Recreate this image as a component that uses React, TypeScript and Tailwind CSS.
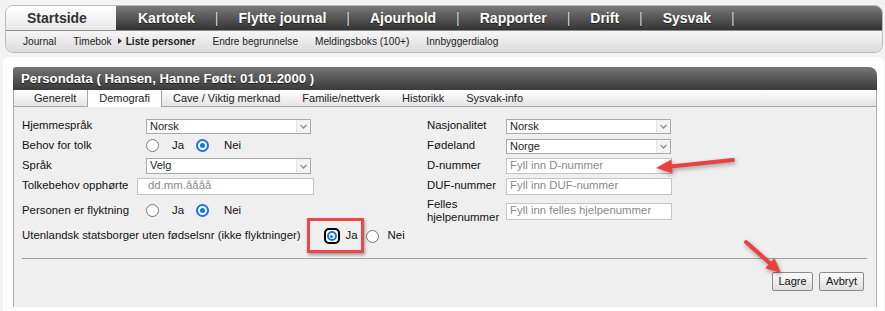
import React from "react";

const navItems = ["Kartotek", "Flytte journal", "Ajourhold", "Rapporter", "Drift", "Sysvak"];
const tabs = ["Generelt", "Demografi", "Cave / Viktig merknad", "Familie/nettverk", "Historikk", "Sysvak-info"];

function Radio({ checked = false }: { checked?: boolean }) {
  if (checked) {
    return (
      <span className="flex h-[13px] w-[13px] shrink-0 items-center justify-center rounded-full border-2 border-[#1a73e8] bg-white">
        <span className="h-[5px] w-[5px] rounded-full bg-[#1a73e8]" />
      </span>
    );
  }
  return <span className="block h-[13px] w-[13px] shrink-0 rounded-full border border-[#767676] bg-white" />;
}

function JaNei({ ja }: { ja: boolean }) {
  return (
    <div className="flex items-center">
      <Radio checked={ja} />
      <span className="ml-[13px]">Ja</span>
      <span className="ml-[12px]">
        <Radio checked={!ja} />
      </span>
      <span className="ml-[15px]">Nei</span>
    </div>
  );
}

function Select({ value, h = "h-[15px]" }: { value: string; h?: string }) {
  return (
    <div className={`flex w-[165px] items-stretch border border-[#a9a9a9] bg-white text-[11px] ${h}`}>
      <span className="flex-1 pl-[3px] leading-[13px] text-[#222]">{value}</span>
      <span className="flex w-[14px] items-center justify-center border-l border-[#e2e2e2] bg-[#f4f4f4]">
        <svg width="7" height="5" viewBox="0 0 7 5">
          <path d="M0.5 0.8 L3.5 4 L6.5 0.8" fill="none" stroke="#8a8a8a" strokeWidth="1.2" />
        </svg>
      </span>
    </div>
  );
}

function TextInput({ placeholder, w = "w-[166px]", h = "h-[17px]", pl = "pl-[3px]" }: { placeholder: string; w?: string; h?: string; pl?: string }) {
  return (
    <div className={`flex items-center border border-[#c4c4c4] bg-white text-[#8a8a8a] ${w} ${h} ${pl}`}>
      {placeholder}
    </div>
  );
}

export default function App() {
  return (
    <div className="relative h-[311px] w-[885px] overflow-hidden bg-[#f3f3f3] font-['Liberation_Sans',Arial,sans-serif] text-[#111]">
      {/* main navigation */}
      <div className="ml-[5px] mr-[2px] mt-[5px] rounded-[8px] border border-[#b8b8b8]">
        <div className="flex h-[24px]">
          <div className="flex w-[110px] items-center rounded-tl-[7px] bg-gradient-to-b from-white to-[#e8e8e8] pl-[21px] text-[14px] font-bold text-[#333]">
            Startside
          </div>
          <div className="flex flex-1 items-center gap-[20px] rounded-tr-[7px] bg-gradient-to-b from-[#7c7c7c] via-[#555] to-[#333] pl-[22px] text-[14px] font-bold text-white [text-shadow:0_1px_1px_rgba(0,0,0,0.6)]">
            {navItems.map((item) => (
              <React.Fragment key={item}>
                <span>{item}</span>
                <span className="font-normal text-[#ddd]">|</span>
              </React.Fragment>
            ))}
          </div>
        </div>
        <div className="flex h-[22px] items-center gap-[17px] rounded-b-[7px] border-t border-[#8c8c8c] bg-gradient-to-b from-[#f6f6f6] to-[#dcdcdc] pl-[17px] text-[10.15px] text-[#222]">
          <span>Journal</span>
          <span>Timebok</span>
          <span className="-ml-[11px] flex items-center font-bold">
            <svg width="4" height="6" viewBox="0 0 4 6" className="mr-[4px]">
              <path d="M0 0 L4 3 L0 6 Z" fill="#333" />
            </svg>
            Liste personer
          </span>
          <span>Endre begrunnelse</span>
          <span>Meldingsboks (100+)</span>
          <span>Innbyggerdialog</span>
        </div>
      </div>

      {/* page body */}
      <div className="ml-[3px] mt-[4px] h-[260px] w-[881px] rounded-t-[6px] bg-white pl-[10px] pr-[7px] pt-[10px]">
        <div className="flex h-[23px] items-center rounded-tl-[3px] rounded-tr-[8px] bg-gradient-to-b from-[#767676] to-[#3a3a3a] pl-[8px] text-[13.2px] font-bold text-white [text-shadow:0_1px_1px_rgba(0,0,0,0.7)]">
          Persondata ( Hansen, Hanne Født: 01.01.2000 )
        </div>
        <div className="flex h-[17px] items-stretch border-x border-b border-[#a6a6a6] bg-gradient-to-b from-white to-[#e4e4e4] pl-[9px] text-[11px] text-[#222]">
          {tabs.map((t) =>
            t === "Demografi" ? (
              <span key={t} className="-mb-px flex items-center border-x border-[#a6a6a6] bg-white px-[11px]">
                {t}
              </span>
            ) : (
              <span key={t} className="flex items-center px-[11px]">
                {t}
              </span>
            )
          )}
        </div>

        <div className="h-[200px] border-x border-[#b0b0b0] bg-[#efefef] pl-[8px] pr-[9px] pt-[9px] text-[11.4px]">
          <div className="flex">
            <div className="w-[405px]">
              <div className="flex h-[20px] items-center">
                <span className="w-[124px]">Hjemmespråk</span>
                <Select value="Norsk" />
              </div>
              <div className="flex h-[20px] items-center">
                <span className="w-[124px]">Behov for tolk</span>
                <JaNei ja={false} />
              </div>
              <div className="flex h-[20px] items-center">
                <span className="w-[124px]">Språk</span>
                <Select value="Velg" h="h-[16px]" />
              </div>
              <div className="flex h-[20px] items-center">
                <span className="w-[115px]">Tolkebehov opphørte</span>
                <TextInput placeholder="dd.mm.åååå" w="w-[177px]" pl="pl-[10px]" />
              </div>
              <div className="mt-[5px] flex h-[20px] items-center">
                <span className="w-[124px]">Personen er flyktning</span>
                <JaNei ja={false} />
              </div>
              <div className="mt-[5px] flex h-[20px] items-center whitespace-nowrap">
                <span>Utenlandsk statsborger uten fødselsnr (ikke flyktninger)</span>
                <span className="ml-[23px] flex h-[16px] w-[16px] items-center justify-center rounded-[5px] border-2 border-black bg-white">
                  <span className="flex h-[10px] w-[10px] items-center justify-center rounded-full border-2 border-[#1a73e8]">
                    <span className="h-[3px] w-[3px] rounded-full bg-[#1a73e8]" />
                  </span>
                </span>
                <span className="ml-[6px]">Ja</span>
                <span className="ml-[8px]">
                  <Radio />
                </span>
                <span className="ml-[9px]">Nei</span>
              </div>
            </div>

            <div>
              <div className="flex h-[20px] items-center">
                <span className="w-[79px]">Nasjonalitet</span>
                <Select value="Norsk" />
              </div>
              <div className="flex h-[20px] items-center">
                <span className="w-[79px]">Fødeland</span>
                <Select value="Norge" />
              </div>
              <div className="flex h-[20px] items-center">
                <span className="w-[79px]">D-nummer</span>
                <TextInput placeholder="Fyll inn D-nummer" h="h-[16px]" />
              </div>
              <div className="flex h-[20px] items-center">
                <span className="w-[79px]">DUF-nummer</span>
                <TextInput placeholder="Fyll inn DUF-nummer" />
              </div>
              <div className="mt-[2px] flex items-center">
                <span className="w-[79px] leading-[13px]">
                  Felles
                  <br />
                  hjelpenummer
                </span>
                <TextInput placeholder="Fyll inn felles hjelpenummer" />
              </div>
            </div>
          </div>

          <div className="mt-[12px] border-t border-[#a0a0a0]" />
          <div className="mt-[13px] flex justify-end gap-[6px] pr-[3px]">
            <button className="h-[19px] w-[41px] rounded-[2px] border border-[#8a8a8a] bg-gradient-to-b from-[#fbfbfb] to-[#dedede] text-[11px] text-[#111]">
              Lagre
            </button>
            <button className="h-[19px] w-[45px] rounded-[2px] border border-[#8a8a8a] bg-gradient-to-b from-[#fbfbfb] to-[#dedede] text-[11px] text-[#111]">
              Avbryt
            </button>
          </div>
        </div>
      </div>

      {/* annotations */}
      <div className="absolute left-[307px] top-[218px] h-[35px] w-[57px] border-[3px] border-[#ea4848] shadow-[1px_2px_3px_rgba(0,0,0,0.35)]" />
      <svg className="pointer-events-none absolute left-0 top-0 drop-shadow-[1px_2px_2px_rgba(0,0,0,0.35)]" width="885" height="311" viewBox="0 0 885 311">
        <line x1="733" y1="160" x2="668" y2="166.8" stroke="#e8413e" strokeWidth="4" strokeLinecap="round" />
        <polygon points="656,168 671.2,159.4 672.6,173.3" fill="#e8413e" />
        <line x1="746" y1="242" x2="772" y2="265" stroke="#e8413e" strokeWidth="4" strokeLinecap="round" />
        <polygon points="781,273 765.2,268.3 774.4,257.9" fill="#e8413e" />
      </svg>
    </div>
  );
}
